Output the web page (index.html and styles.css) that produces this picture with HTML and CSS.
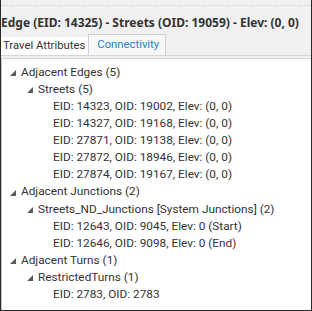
FILE: index.html
```html
<!DOCTYPE html>
<html lang="en">

<head>
    <meta charset="UTF-8">
    <title>Edge Connectivity</title>
    <link rel="stylesheet" href="styles.css">
</head>

<body>
    <div class="pane">
        <div class="grip"></div>
        <h2 class="title">Edge (EID: 14325) - Streets (OID: 19059) - Elev: (0, 0)</h2>
        <div class="tabs">
            <div class="tab">Travel Attributes</div>
            <div class="tab active">Connectivity</div>
        </div>
        <div class="tree">
            <div class="node lvl0"><span class="arrow"></span>Adjacent Edges (5)</div>
            <div class="node lvl1"><span class="arrow"></span>Streets (5)</div>
            <div class="node lvl2">EID: 14323, OID: 19002, Elev: (0, 0)</div>
            <div class="node lvl2">EID: 14327, OID: 19168, Elev: (0, 0)</div>
            <div class="node lvl2">EID: 27871, OID: 19138, Elev: (0, 0)</div>
            <div class="node lvl2">EID: 27872, OID: 18946, Elev: (0, 0)</div>
            <div class="node lvl2">EID: 27874, OID: 19167, Elev: (0, 0)</div>
            <div class="node lvl0"><span class="arrow"></span>Adjacent Junctions (2)</div>
            <div class="node lvl1"><span class="arrow"></span>Streets_ND_Junctions [System Junctions] (2)</div>
            <div class="node lvl2">EID: 12643, OID: 9045, Elev: 0 (Start)</div>
            <div class="node lvl2">EID: 12646, OID: 9098, Elev: 0 (End)</div>
            <div class="node lvl0"><span class="arrow"></span>Adjacent Turns (1)</div>
            <div class="node lvl1"><span class="arrow"></span>RestrictedTurns (1)</div>
            <div class="node lvl2">EID: 2783, OID: 2783</div>
        </div>
    </div>
</body>

</html>
```

FILE: styles.css
```css
* {
    margin: 0;
    padding: 0;
    box-sizing: border-box;
}

body {
    width: 312px;
    height: 311px;
    overflow: hidden;
    background: #fff;
    font-family: 'Roboto', 'Noto Sans', sans-serif;
    color: #333;
}

.pane {
    width: 312px;
    height: 311px;
    display: flex;
    flex-direction: column;
    background: #f0f0f0;
    border: 1px solid #2b2b2b;
    border-top: none;
}

/* dotted gripper strip at the top */
.grip {
    height: 14px;
    flex-shrink: 0;
    border-top: 5px solid #f0f0f0;
    background: repeating-linear-gradient(90deg, #c4c4c4 0 1px, transparent 1px 3px);
    background-size: 100% 1px;
    background-repeat: no-repeat;
}

.title {
    font-family: 'Noto Sans', 'Open Sans', sans-serif;
    font-size: 12px;
    font-weight: bold;
    line-height: 17px;
    color: #333;
    white-space: nowrap;
}

.tabs {
    display: flex;
    align-items: flex-end;
    height: 25px;
    flex-shrink: 0;
    border-bottom: 1px solid #d6d6d6;
}

.tab {
    font-size: 11.3px;
    line-height: 18px;
    padding: 0 3px 0 2px;
    background: #fff;
    color: #333;
    white-space: nowrap;
}

.tab.active {
    height: 21px;
    line-height: 19px;
    padding: 0 6px 0 8px;
    color: #2a7fc8;
    background: #f7f7f7;
    border: 1px solid #d0d0d0;
    border-bottom: none;
}

.tree {
    flex: 1;
    background: #fff;
    margin-top: 2px;
    border-top: 1px solid #d6d6d6;
    border-left: 1px solid #c8c8c8;
    padding-top: 4.5px;
}

.node {
    font-size: 11.8px;
    line-height: 17.15px;
    height: 17.15px;
    white-space: nowrap;
    display: flex;
    align-items: center;
}

.lvl0 { padding-left: 8px; }
.lvl1 { padding-left: 25px; }
.lvl2 { padding-left: 51px; }

/* expanded-node triangle */
.arrow {
    width: 0;
    height: 0;
    border-left: 6px solid transparent;
    border-bottom: 6px solid #5a5a5a;
    margin-right: 5px;
    margin-top: 1px;
}
```
